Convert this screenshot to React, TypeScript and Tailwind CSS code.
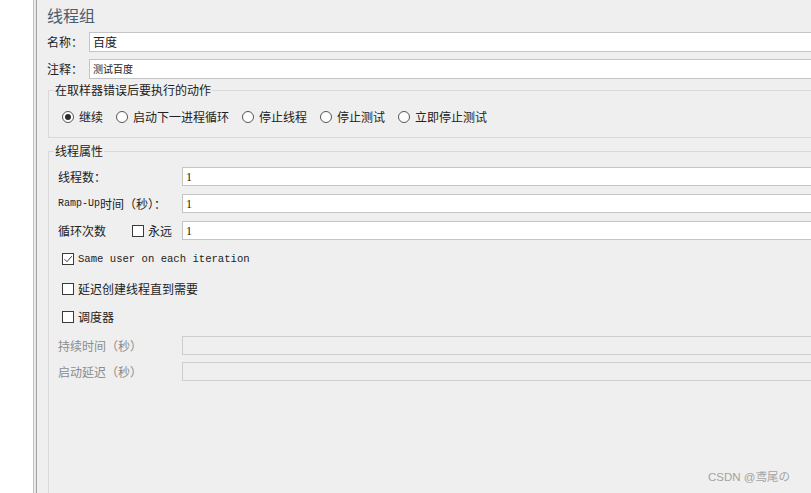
import type { ReactNode } from 'react'

function Radio({ checked, label }: { checked?: boolean; label: string }) {
  return (
    <label className="flex items-center gap-[5px] h-[16px]">
      <span className="w-[12px] h-[12px] rounded-full border border-[#555555] bg-white flex items-center justify-center">
        {checked && <span className="w-[6px] h-[6px] rounded-full bg-[#2b2b2b]" />}
      </span>
      <span>{label}</span>
    </label>
  )
}

function Check({ checked }: { checked?: boolean }) {
  return (
    <span className="w-[12px] h-[12px] border border-[#3a3a3a] bg-white flex items-center justify-center shrink-0">
      {checked && (
        <svg viewBox="0 0 10 10" className="w-[10px] h-[10px]" fill="none" stroke="#3a3a3a" strokeWidth="1">
          <path d="M1.5 5.2 L4 7.7 L8.8 2.2" />
        </svg>
      )}
    </span>
  )
}

function Field({ label, value, disabled }: { label: ReactNode; value?: string; disabled?: boolean }) {
  return (
    <div className="flex items-center h-[19px] pl-[4px]">
      <div className={`w-[124px] shrink-0 flex items-center ${disabled ? 'text-[#8c8c8c]' : ''}`}>{label}</div>
      <div
        className={`w-[700px] shrink-0 h-[19px] border border-[#c4c4c4] pl-[3px] flex items-center text-[12px] font-['Liberation_Serif',serif] ${
          disabled ? 'bg-[#efefef] border-[#cdcdcd]' : 'bg-white'
        }`}
      >
        {value}
      </div>
    </div>
  )
}

export default function App() {
  return (
    <div className="w-[811px] h-[493px] flex overflow-hidden bg-white text-[12px] leading-[16px] text-[#222222] font-['Noto_Sans_CJK_SC',sans-serif]">
      <div className="w-[33px] bg-white" />
      <div className="w-px bg-[#c4c4c4]" />
      <div className="w-[2px] bg-[#e9e9e9]" />
      <div className="w-px bg-[#a2a2a2]" />

      <main className="relative flex-1 bg-[#efefef] overflow-hidden pl-[10px]">
        <h1 className="mt-[5px] text-[16px] leading-[20px] text-[#4d5c6c]">线程组</h1>

        {/* name / comment */}
        <div className="mt-[7px] flex items-center h-[20px]">
          <span className="w-[42px] shrink-0">名称：</span>
          <div className="w-[780px] shrink-0 h-[20px] bg-white border border-[#c4c4c4] pl-[3px] flex items-center text-[12px]">
            百度
          </div>
        </div>
        <div className="mt-[7px] flex items-center h-[20px]">
          <span className="w-[42px] shrink-0">注释：</span>
          <div className="w-[780px] shrink-0 h-[20px] bg-white border border-[#c4c4c4] pl-[3px] flex items-center text-[10px]">
            测试百度
          </div>
        </div>

        {/* sampler error action */}
        <fieldset className="mt-[3px] ml-[1px] w-[790px] border border-[#d9d9d9] px-[5px] pb-[12px]">
          <legend className="px-[1px] leading-[16px]">在取样器错误后要执行的动作</legend>
          <div className="pt-[11px] pl-[8px] flex items-center gap-[13px]">
            <Radio checked label="继续" />
            <Radio label="启动下一进程循环" />
            <Radio label="停止线程" />
            <Radio label="停止测试" />
            <Radio label="立即停止测试" />
          </div>
        </fieldset>

        {/* thread properties */}
        <fieldset className="mt-[5px] ml-[1px] w-[790px] h-[400px] border border-[#d9d9d9] px-[5px]">
          <legend className="px-[1px] leading-[16px]">线程属性</legend>
          <div className="pt-[8px] flex flex-col">
            <Field label="线程数：" value="1" />
            <div className="mt-[8px]">
              <Field
                label={
                  <>
                    <span className="font-['Liberation_Mono',monospace] text-[10px]">Ramp-Up</span>
                    <span>时间（秒）：</span>
                  </>
                }
                value="1"
              />
            </div>
            <div className="mt-[8px]">
              <Field
                label={
                  <>
                    <span className="w-[74px]">循环次数</span>
                    <Check />
                    <span className="ml-[4px]">永远</span>
                  </>
                }
                value="1"
              />
            </div>

            <div className="mt-[11px] pl-[8px] flex items-center gap-[4px] h-[16px]">
              <Check checked />
              <span className="font-['Liberation_Mono',monospace] text-[10.6px]">Same user on each iteration</span>
            </div>
            <div className="mt-[14px] pl-[8px] flex items-center gap-[4px] h-[16px]">
              <Check />
              <span>延迟创建线程直到需要</span>
            </div>
            <div className="mt-[12px] pl-[8px] flex items-center gap-[4px] h-[16px]">
              <Check />
              <span>调度器</span>
            </div>

            <div className="mt-[11px]">
              <Field label="持续时间（秒）" disabled />
            </div>
            <div className="mt-[7px]">
              <Field label="启动延迟（秒）" disabled />
            </div>
          </div>
        </fieldset>

        <span className="absolute right-[21px] bottom-[8px] text-[11.5px] text-[#a3a3a3] font-['Liberation_Sans','Noto_Sans_CJK_SC',sans-serif]">
          CSDN @鸢尾の
        </span>
      </main>
    </div>
  )
}
